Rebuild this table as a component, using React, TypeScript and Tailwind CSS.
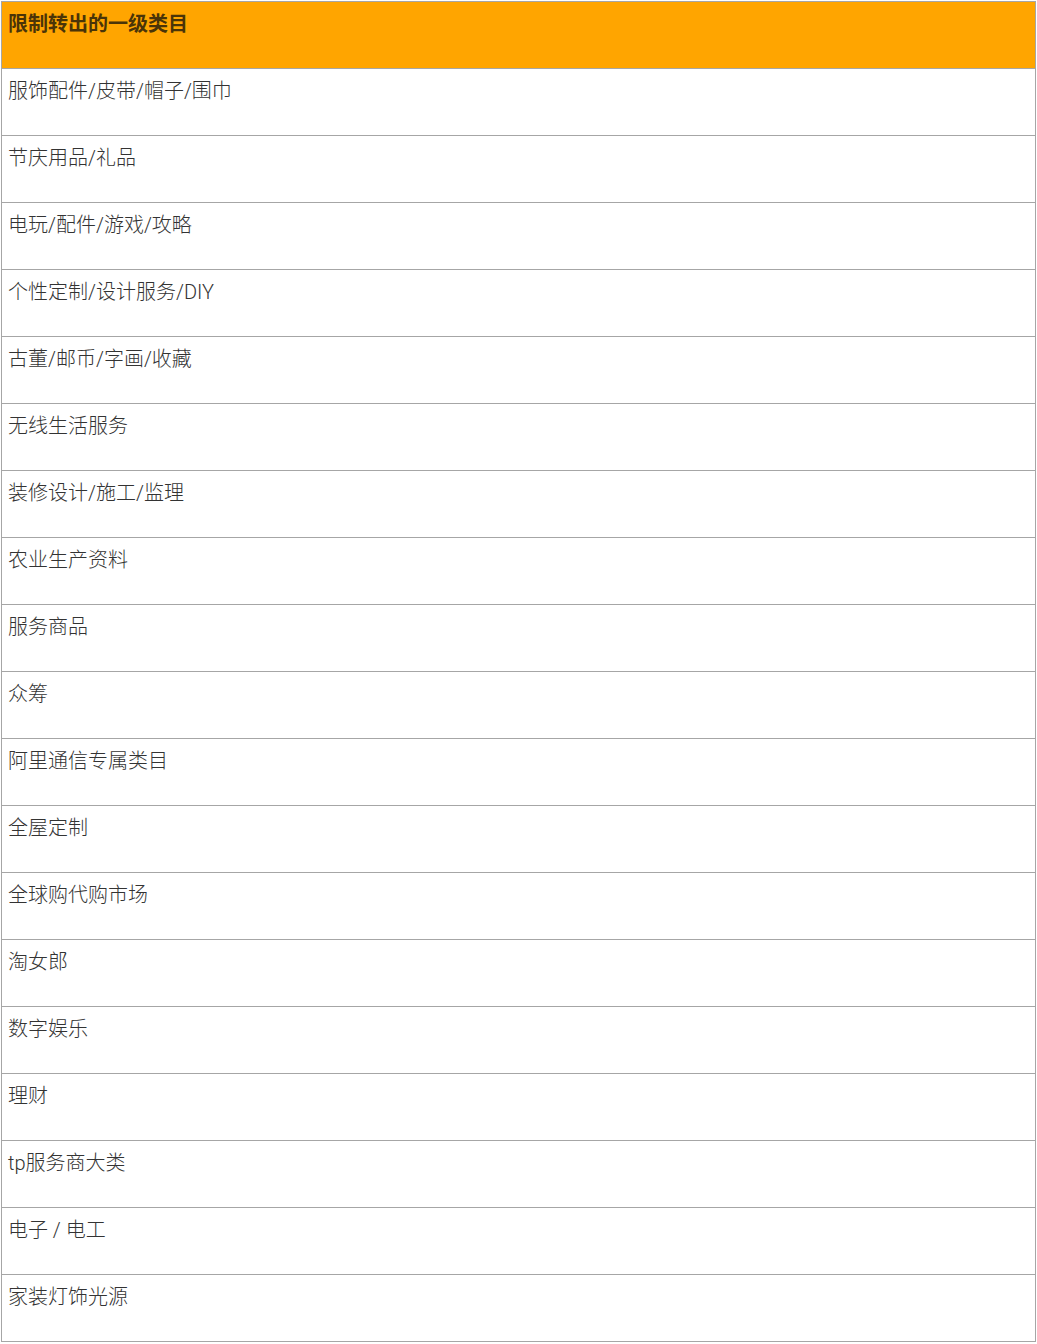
const ROWS = [
  "服饰配件/皮带/帽子/围巾",
  "节庆用品/礼品",
  "电玩/配件/游戏/攻略",
  "个性定制/设计服务/DIY",
  "古董/邮币/字画/收藏",
  "无线生活服务",
  "装修设计/施工/监理",
  "农业生产资料",
  "服务商品",
  "众筹",
  "阿里通信专属类目",
  "全屋定制",
  "全球购代购市场",
  "淘女郎",
  "数字娱乐",
  "理财",
  "tp服务商大类",
  "电子 / 电工",
  "家装灯饰光源",
];

export default function App() {
  return (
    <div className="min-h-screen bg-white pt-px pl-px" style={{ fontFamily: 'Roboto, "Noto Sans CJK SC", sans-serif' }}>
      <div className="w-[1035px] border-l border-t border-[#a6a6a6]">
        {/* Header */}
        <div className="h-[67px] border-b border-r border-[#a6a6a6] bg-[#ffa500] pl-[6px] pt-[8px]">
          <span className="text-[20px] leading-[28px] font-bold text-[#4a3408]">限制转出的一级类目</span>
        </div>

        {ROWS.map((label) => (
          <div key={label} className="h-[67px] border-b border-r border-[#a6a6a6] pl-[6px] pt-[8px]">
            <span className="text-[20px] leading-[28px] font-light text-[#333333]">{label}</span>
          </div>
        ))}
      </div>
    </div>
  );
}
